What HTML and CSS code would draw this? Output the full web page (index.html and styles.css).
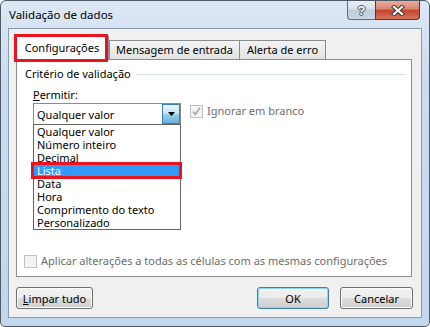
FILE: index.html
```html
<!DOCTYPE html>
<html>
<head>
    <link rel="stylesheet" href="styles.css">
</head>
<body>
    <div class="window">
        <div class="titlebar">
            <span class="title">Validação de dados</span>
            <div class="caption-buttons">
                <div class="cap-btn help">?</div>
                <div class="cap-btn close">
                    <svg width="14" height="11" viewBox="0 0 14 11">
                        <path d="M3 2 L11 9 M11 2 L3 9" stroke="#3a3a3a" stroke-width="4.2" stroke-linecap="square"/>
                        <path d="M3 2 L11 9 M11 2 L3 9" stroke="#fff" stroke-width="2.2" stroke-linecap="square"/>
                    </svg>
                </div>
            </div>
        </div>

        <div class="client">
            <div class="tabs">
                <div class="tab active">Configurações</div>
                <div class="tab">Mensagem de entrada</div>
                <div class="tab">Alerta de erro</div>
            </div>

            <div class="panel">
                <div class="group-title">
                    <span>Critério de validação</span>
                    <span class="group-line"></span>
                </div>
                <div class="field-label"><u>P</u>ermitir:</div>
                <div class="field-row">
                    <div class="combo">
                        <span class="combo-value">Qualquer valor</span>
                        <span class="combo-arrow">
                            <svg width="7" height="4" viewBox="0 0 7 4"><path d="M0 0 H7 L3.5 4 Z" fill="#000"/></svg>
                        </span>
                        <ul class="combo-list">
                            <li>Qualquer valor</li>
                            <li>Número inteiro</li>
                            <li>Decimal</li>
                            <li class="selected">Lista</li>
                            <li>Data</li>
                            <li>Hora</li>
                            <li>Comprimento do texto</li>
                            <li>Personalizado</li>
                        </ul>
                    </div>
                    <div class="check disabled">
                        <span class="box">
                            <svg width="11" height="11" viewBox="0 0 11 11"><path d="M2 5.5 L4.3 8.5 L9 1.5" stroke="#a8a8a8" stroke-width="1.6" fill="none"/></svg>
                        </span>
                        <span>Ignorar em branco</span>
                    </div>
                </div>
                <div class="check disabled apply">
                    <span class="box"></span>
                    <span>Aplicar alterações a todas as células com as mesmas configurações</span>
                </div>
            </div>

            <div class="buttons">
                <button class="btn clear"><u>L</u>impar tudo</button>
                <button class="btn ok">OK</button>
                <button class="btn cancel">Cancelar</button>
            </div>
        </div>
    </div>
</body>
</html>
```

FILE: styles.css
```css
* {
    box-sizing: border-box;
}

body {
    margin: 0;
    background: #fff;
    font-family: "Noto Sans", "Open Sans", sans-serif;
    font-size: 11px;
    color: #000;
}

.window {
    width: 430px;
    height: 327px;
    border: 1px solid #4f5a68;
    border-radius: 6px 6px 5px 5px;
    background: linear-gradient(#dce7f4, #cbdcef 25%, #c3d7ed);
    display: flex;
    flex-direction: column;
    overflow: hidden;
}

.titlebar {
    height: 27px;
    display: flex;
    justify-content: space-between;
    align-items: flex-start;
    padding: 0 9px 0 8px;
}

.title {
    font-size: 11.5px;
    line-height: 14px;
    margin-top: 7px;
}

.caption-buttons {
    display: flex;
}

.cap-btn {
    height: 19px;
    display: flex;
    align-items: center;
    justify-content: center;
    border: 1px solid #5f6d80;
    border-top: none;
}

.help {
    width: 28px;
    border-right: none;
    border-radius: 0 0 0 4px;
    background: linear-gradient(#e8eef6, #d6e0ec 45%, #bdcbdc 50%, #cbd7e5);
    font-family: "Liberation Sans", sans-serif;
    font-weight: bold;
    font-size: 13px;
    color: #fff;
    text-shadow: 1px 0 #4b5563, -1px 0 #4b5563, 0 1px #4b5563, 0 -1px #4b5563;
}

.close {
    width: 45px;
    border-color: #6a3026;
    border-radius: 0 0 4px 0;
    background: linear-gradient(#e9ab9c, #d98572 45%, #c4442b 50%, #d4705a);
}

.client {
    margin: 0 7px;
    height: 290px;
    border: 1px solid #8a9bb0;
    background: #f0f0f0;
    display: flex;
    flex-direction: column;
}

.tabs {
    height: 30px;
    padding-left: 6px;
    display: flex;
    align-items: flex-end;
}

.tab {
    height: 19px;
    line-height: 17px;
    text-align: center;
    border: 1px solid #898c95;
    border-bottom: none;
    background: linear-gradient(#f3f3f3, #ebebeb 50%, #e3e3e3);
    white-space: nowrap;
}

.tab:nth-child(2) {
    width: 131px;
}

.tab:nth-child(3) {
    width: 86px;
    border-left: none;
}

.tab.active {
    position: relative;
    z-index: 1;
    width: 94px;
    height: 24px;
    line-height: 21px;
    margin-bottom: -1px;
    background: #fff;
}

.tab.active::after {
    content: "";
    position: absolute;
    top: -3px;
    left: -2px;
    right: 0;
    bottom: -2px;
    border: 3px solid #e8141f;
}

.panel {
    margin: 0 9px 0 7px;
    height: 218px;
    border: 1px solid #898c95;
    background: #fff;
    display: flex;
    flex-direction: column;
}

.group-title {
    margin-top: 7px;
    padding: 0 5px 0 8px;
    line-height: 14px;
    display: flex;
    align-items: center;
}

.group-line {
    flex: 1;
    height: 1px;
    margin: 1px 0 0 5px;
    background: #d5dfe5;
}

.field-label {
    margin-top: 7px;
    padding-left: 16px;
    line-height: 14px;
}

.field-row {
    margin-top: 1px;
    padding-left: 16px;
    display: flex;
    align-items: flex-start;
}

.combo {
    position: relative;
    width: 148px;
    height: 22px;
    border: 1px solid #8b8b8b;
    background: #fff;
    display: flex;
    align-items: center;
    justify-content: space-between;
}

.combo-value {
    padding-left: 3px;
}

.combo-arrow {
    width: 18px;
    height: 20px;
    border: 1px solid #3c7fb1;
    background: linear-gradient(#e5f4fc, #c4e5f6 50%, #98d1ef 50%, #68b3db);
    display: flex;
    align-items: center;
    justify-content: center;
}

.combo-list {
    position: absolute;
    top: 20px;
    left: -1px;
    width: 148px;
    margin: 0;
    padding: 0;
    list-style: none;
    border: 1px solid #646464;
    background: #fff;
    z-index: 2;
}

.combo-list li {
    height: 13px;
    line-height: 13px;
    padding-left: 3px;
}

.combo-list li.selected {
    position: relative;
    background: #3399ff;
    color: #fff;
}

.combo-list li.selected::after {
    content: "";
    position: absolute;
    top: -2px;
    left: -3px;
    right: -2px;
    bottom: -2px;
    border: 3px solid #e8141f;
}

.check {
    display: flex;
    align-items: center;
    line-height: 14px;
}

.check .box {
    width: 13px;
    height: 13px;
    margin-right: 4px;
    border: 1px solid #8e8f8f;
    background: #fff;
    display: flex;
    align-items: center;
    justify-content: center;
}

.check.disabled {
    color: #6d6d6d;
}

.check.disabled .box {
    border-color: #c2c2c2;
    background: #f4f4f4;
}

.field-row .check {
    margin: 1px 0 0 9px;
    line-height: 14px;
}

.apply {
    margin-top: auto;
    margin-bottom: 8px;
    padding-left: 7px;
}

.buttons {
    margin-top: 10px;
    padding: 0 8px 0 7px;
    display: flex;
    gap: 11px;
}

.btn {
    height: 22px;
    padding: 0;
    font-family: inherit;
    font-size: 11px;
    color: #000;
    border: 1px solid #707070;
    border-radius: 3px;
    background: linear-gradient(#f2f2f2, #ebebeb 50%, #dddddd 50%, #cfcfcf);
    box-shadow: inset 0 0 0 1px #fcfcfc;
}

.clear {
    width: 77px;
}

.ok {
    width: 72px;
    margin-left: auto;
    border-color: #3c7fb1;
    box-shadow: inset 0 0 0 1px #8fd6f5;
}

.cancel {
    width: 73px;
}
```
